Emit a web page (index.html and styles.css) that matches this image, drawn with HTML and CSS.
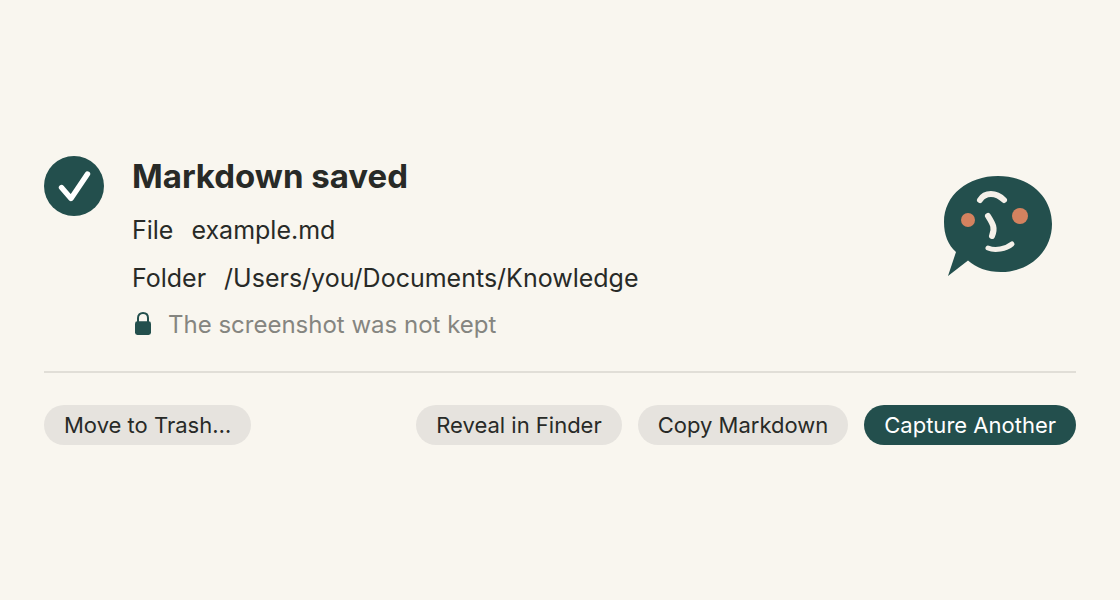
FILE: index.html
```html
<!DOCTYPE html>
<html lang="en">
<head>
<meta charset="utf-8">
<title>Markdown saved</title>
<link rel="stylesheet" href="styles.css">
</head>
<body>
<main class="panel">
  <section class="summary">
    <svg class="status" viewBox="0 0 60 60" aria-hidden="true">
      <circle cx="30" cy="30" r="30" fill="#234f4d"/>
      <path d="M17.5 31.5 27 42.5 43.5 18" fill="none" stroke="#fff" stroke-width="5.4" stroke-linecap="round" stroke-linejoin="round"/>
    </svg>
    <div class="details">
      <h1 class="title">Markdown saved</h1>
      <dl class="fields">
        <div class="field"><dt>File</dt><dd>example.md</dd></div>
        <div class="field"><dt>Folder</dt><dd>/Users/you/Documents/Knowledge</dd></div>
      </dl>
      <p class="note">
        <svg class="lock" viewBox="0 0 20 26" aria-hidden="true">
          <rect x="3" y="9.300" width="16" height="13.700" rx="2.4" fill="#234f4d"/>
          <path d="M6 10V6C6 2.700 8.200 1 11 1s5 1.700 5 5V10" fill="none" stroke="#234f4d" stroke-width="2"/>
        </svg>
        The screenshot was not kept
      </p>
    </div>
    <svg class="mascot" viewBox="0 0 110 102" aria-hidden="true">
      <path d="M54 1C85 1 108 21 108 49 108 76 86 97 57 97 43 97 32 92.500 24 85.500L4 101 12 77C4 70 0 60 0 47 0 20 24 1 54 1Z" fill="#234f4d"/>
      <circle cx="24" cy="45" r="7" fill="#d4825f"/>
      <circle cx="76" cy="41" r="8" fill="#d4825f"/>
      <g fill="none" stroke="#f5f0e9" stroke-linecap="round">
        <path d="M36 25C41 17 52 17 60 25" stroke-width="6"/>
        <path d="M44 41C49 49 51.500 53 48 61" stroke-width="6"/>
        <path d="M44 73C51 76 62 74 68 69" stroke-width="5"/>
      </g>
    </svg>
  </section>
  <footer class="actions">
    <button class="button trash" type="button">Move to Trash…</button>
    <button class="button" type="button">Reveal in Finder</button>
    <button class="button" type="button">Copy Markdown</button>
    <button class="button primary" type="button">Capture Another</button>
  </footer>
</main>
</body>
</html>
```
FILE: styles.css
```css
* { box-sizing: border-box; }

body {
  margin: 0;
  min-height: 100vh;
  display: flex;
  align-items: center;
  background: #f9f6ef;
  color: #282a27;
  font-family: Inter, "Liberation Sans", sans-serif;
}

.panel { flex: 1; padding: 1px 44px 0; }

.summary {
  display: flex;
  align-items: flex-start;
  padding-bottom: 31px;
  border-bottom: 2px solid #e1ded7;
}

.status { width: 60px; height: 60px; flex: none; }

.details { flex: 1; min-width: 0; margin-left: 28px; }

.title {
  margin: 0 0 18px;
  font-size: 33px;
  line-height: 40px;
  font-weight: 700;
}

.fields {
  display: grid;
  gap: 16px;
  margin: 0;
}

.field {
  display: flex;
  gap: 18px;
  font-size: 25px;
  line-height: 32px;
}

.field dd { margin: 0; }

.note {
  display: flex;
  align-items: center;
  gap: 16px;
  margin: 16px 0 0;
  font-size: 24px;
  line-height: 30px;
  color: #858580;
}

.lock { width: 20px; height: 26px; overflow: visible; }

.mascot {
  width: 110px;
  height: 102px;
  flex: none;
  margin: 19px 22px 0 0;
}

.actions {
  display: flex;
  justify-content: flex-end;
  gap: 16px;
  padding-top: 32px;
}

.button {
  height: 40px;
  padding: 0 20px;
  border: 0;
  border-radius: 20px;
  background: #e6e3de;
  color: inherit;
  font: inherit;
  font-size: 22px;
}

.trash { margin-right: auto; }

.primary { background: #234f4d; color: #fff; }
```
